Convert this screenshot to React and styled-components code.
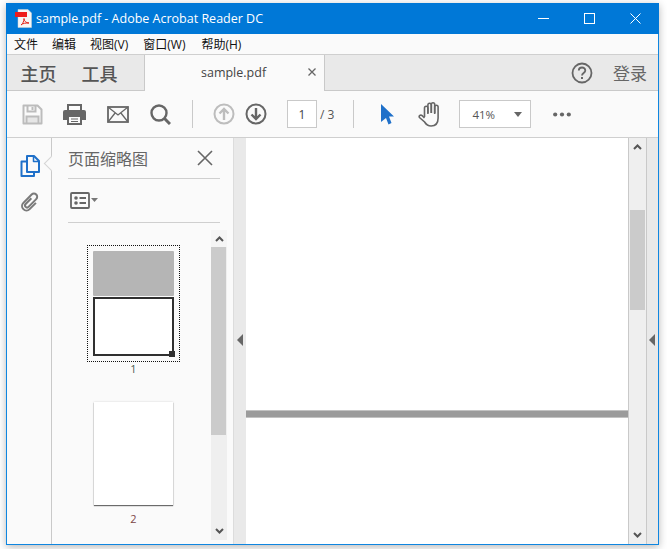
import React from 'react';
import styled, { createGlobalStyle } from 'styled-components';

const cjk = '"Open Sans", "Noto Sans CJK SC", sans-serif';

const GlobalStyle = createGlobalStyle`
  html, body {
    margin: 0;
    padding: 0;
    background: #fff;
  }
  body {
    width: 667px;
    height: 549px;
    overflow: hidden;
    font-family: ${cjk};
  }
`;

const Desktop = styled.div`
  width: 667px;
  height: 549px;
  padding: 3px 8px 4px 6px;
  box-sizing: border-box;
`;

const Window = styled.div`
  height: 100%;
  display: flex;
  flex-direction: column;
  box-sizing: border-box;
  border: 1px solid #0f86e0;
  border-top: 0;
  background: #fafafa;
  box-shadow: 0 2px 8px rgba(0, 0, 0, 0.28);
`;

const TitleBar = styled.div`
  height: 31px;
  flex: none;
  margin: 0 -1px;
  background: #0078d7;
  color: #fff;
  display: flex;
  align-items: center;
  padding-left: 9px;
  padding-right: 1px;
  font-size: 12.5px;
`;

const TitleText = styled.span`
  margin-left: 4px;
  flex: 1;
`;

const WinButton = styled.div`
  width: 46px;
  height: 31px;
  display: flex;
  align-items: center;
  justify-content: center;
`;

const MenuBar = styled.div`
  height: 20px;
  flex: none;
  display: flex;
  align-items: center;
  padding-left: 7px;
  font-size: 12px;
  color: #111;
  background: #fafafa;
  border-bottom: 1px solid #cfcfcf;
`;

const MenuItem = styled.span`
  margin-left: ${p => p.$gap}px;
`;

const TabBar = styled.div`
  height: 35px;
  flex: none;
  display: flex;
  background: #e9e9e9;
  border-bottom: 1px solid #c9c9c9;
`;

const HomeTabs = styled.div`
  width: 137px;
  display: flex;
  align-items: center;
  gap: 25px;
  padding-left: 13.5px;
  box-sizing: border-box;
  font-size: 18px;
  color: #555;
  font-weight: 500;
`;

const FileTab = styled.div`
  width: 181px;
  height: 36px;
  box-sizing: border-box;
  background: #fafafa;
  border-left: 1px solid #c9c9c9;
  border-right: 1px solid #c9c9c9;
  display: flex;
  align-items: center;
  padding-left: 56px;
  padding-bottom: 2px;
  font-size: 12.5px;
  color: #444;
`;

const TabClose = styled.span`
  margin-left: auto;
  margin-right: 8px;
  display: flex;
`;

const TabRight = styled.div`
  flex: 1;
  display: flex;
  justify-content: flex-end;
  align-items: center;
  gap: 20px;
  padding-right: 11px;
  font-size: 17px;
  color: #666;
`;

const Toolbar = styled.div`
  height: 46px;
  flex: none;
  display: flex;
  align-items: center;
  padding-left: 15px;
  background: #fafafa;
  border-bottom: 1px solid #cfcfcf;
  box-sizing: content-box;
`;

const ToolIcon = styled.div`
  display: flex;
  margin-left: ${p => p.$gap || 0}px;
`;

const ToolDivider = styled.div`
  width: 1px;
  height: 28px;
  background: #c9c9c9;
  margin-left: ${p => p.$gap}px;
`;

const PageInput = styled.div`
  width: 30px;
  height: 28px;
  margin-left: 20px;
  box-sizing: border-box;
  border: 1px solid #c9c9c9;
  background: #fff;
  display: flex;
  align-items: center;
  justify-content: center;
  font-size: 12px;
  color: #444;
`;

const PageCount = styled.span`
  margin-left: 3px;
  font-size: 12px;
  color: #555;
`;

const ZoomSelect = styled.div`
  width: 72px;
  height: 28px;
  margin-left: 18px;
  box-sizing: border-box;
  border: 1px solid #c9c9c9;
  background: #fff;
  display: flex;
  align-items: center;
  padding: 0 8px 0 12px;
  justify-content: space-between;
  font-size: 11.5px;
  color: #555;
`;

const Caret = styled.span`
  width: 0;
  height: 0;
  border-left: 4px solid transparent;
  border-right: 4px solid transparent;
  border-top: 5px solid #666;
`;

const Body = styled.div`
  flex: 1;
  min-height: 0;
  display: flex;
`;

const Rail = styled.div`
  width: 45px;
  flex: none;
  box-sizing: border-box;
  border-right: 1px solid #c9c9c9;
  display: flex;
  flex-direction: column;
  align-items: center;
  gap: 14px;
  padding: 17px 0 0 2px;
  position: relative;
`;

const RailNotch = styled.span`
  position: absolute;
  right: -6px;
  top: 20px;
  width: 10px;
  height: 10px;
  background: #fafafa;
  border-left: 1px solid #d4d4d4;
  border-bottom: 1px solid #d4d4d4;
  transform: rotate(45deg);
`;

const Panel = styled.div`
  width: 182px;
  flex: none;
  padding: 0 13px 0 16px;
  box-sizing: border-box;
  display: flex;
  flex-direction: column;
  border-right: 1px solid #dcdcdc;
`;

const PanelHeader = styled.div`
  height: 40px;
  flex: none;
  display: flex;
  align-items: center;
  justify-content: space-between;
  padding-right: 7px;
  border-bottom: 1px solid #cfcfcf;
  font-size: 16px;
  color: #666;
`;

const PanelTools = styled.div`
  height: 43px;
  flex: none;
  display: flex;
  align-items: center;
  gap: 2px;
  padding-left: 2px;
  border-bottom: 1px solid #cfcfcf;
`;

const ThumbArea = styled.div`
  flex: 1;
  min-height: 0;
  display: flex;
  margin: 7px -7px 0 0;
  padding-bottom: 4px;
`;

const ThumbList = styled.div`
  flex: 1;
  display: flex;
  flex-direction: column;
  align-items: center;
  padding: 15px 12px 0 0;
`;

const ThumbFrame = styled.div`
  width: 93px;
  height: 117px;
  box-sizing: border-box;
  border: 1px dotted #111;
  padding: 5px;
  display: flex;
  flex-direction: column;
  position: relative;
`;

const ThumbGrey = styled.div`
  height: 45px;
  background: #b5b5b5;
  border-radius: 1px;
`;

const ThumbView = styled.div`
  flex: 1;
  margin-top: 1px;
  background: #fff;
  border: 2px solid #2f2f2f;
`;

const ThumbHandle = styled.span`
  position: absolute;
  right: 4px;
  bottom: 4px;
  width: 6px;
  height: 6px;
  background: #2f2f2f;
`;

const ThumbLabel = styled.div`
  font-size: 11px;
  line-height: 14px;
  margin-top: ${p => p.$gap}px;
  color: ${p => p.$color};
`;

const ThumbPage = styled.div`
  width: 79px;
  height: 103px;
  margin-top: 26px;
  background: #fff;
  box-shadow: 0 0 2px rgba(0, 0, 0, 0.15), 0 1px 1px rgba(0, 0, 0, 0.55);
`;

const Scrollbar = styled.div`
  width: ${p => p.$width}px;
  flex: none;
  background: #efefef;
  display: flex;
  flex-direction: column;
  align-items: ${p => p.$align || 'center'};
  box-sizing: border-box;
`;

const ScrollButton = styled.div`
  height: 17px;
  flex: none;
  display: flex;
  align-items: center;
  justify-content: center;
  background: ${p => p.$bg || 'transparent'};
  align-self: stretch;
`;

const ScrollThumb = styled.div`
  width: 15px;
  height: ${p => p.$height}px;
  margin-top: ${p => p.$top || 0}px;
  flex: none;
  background: #cbcbcb;
`;

const ScrollSpace = styled.div`
  flex: 1;
`;

const Splitter = styled.div`
  width: ${p => p.$width}px;
  flex: none;
  background: #e9e9e9;
  display: flex;
  align-items: center;
  justify-content: center;
  padding: 0 1px 2px 0;
  box-sizing: border-box;
`;

const LeftArrow = styled.span`
  width: 0;
  height: 0;
  border-top: 6px solid transparent;
  border-bottom: 6px solid transparent;
  border-right: 6px solid #666;
`;

const Viewer = styled.div`
  flex: 1;
  min-width: 0;
  background: #fff;
  display: flex;
  flex-direction: column;
  border-right: 1px solid #c9c9c9;
`;

const PageGap = styled.div`
  height: 8px;
  margin-top: 272px;
  flex: none;
  background: #9b9b9b;
  border-top: 1px solid #c2c2c2;
  border-bottom: 1px solid #c2c2c2;
  box-sizing: border-box;
`;

const RightScroll = styled(Scrollbar)`
  border-right: 1px solid #c9c9c9;
`;

const Chevron = ({ down }) => (
  <svg width="9" height="7" viewBox="0 0 9 7">
    <path
      d={down ? 'M1 1l3.500 3.500L8 1' : 'M1 6l3.500-3.500L8 6'}
      fill="none"
      stroke="#555"
      strokeWidth="2"
    />
  </svg>
);

const PdfIcon = () => (
  <svg width="17" height="19" viewBox="0 0 17 19">
    <path d="M3 .5h10l3.500 3.500v14.500H3z" fill="#f6f6f6" stroke="#d0d0d0" strokeWidth="0.5" />
    <rect x="0" y="3" width="12" height="5" fill="#ee1c1c" />
    <path
      d="M6 16c2-1.500 3-4 3-6.500 0 2.500 2 4.500 5 4.500-3 0-6 0-8 2z"
      fill="none"
      stroke="#e2231a"
      strokeWidth="1"
    />
  </svg>
);

const SaveIcon = () => (
  <svg width="21" height="21" viewBox="0 0 21 21" fill="none" stroke="#bcbcbc" strokeWidth="2">
    <path d="M4.500 12.500h12v7h-12z" fill="#e6e6e6" stroke="none" />
    <path d="M1.500 1.500h14l4 4v14h-18z" strokeLinejoin="round" />
    <path d="M5.500 1.500v6h8v-6M4.500 19.500v-7h12v7" />
    <path d="M10.500 3v3" />
  </svg>
);

const PrintIcon = () => (
  <svg width="23" height="21" viewBox="0 0 23 21">
    <path d="M5 1h13v6H5z" fill="none" stroke="#666" strokeWidth="2" />
    <path d="M2 6h19a2 2 0 012 2v8h-5v-4H5v4H0V8a2 2 0 012-2z" fill="#666" />
    <path d="M5 12h13v8H5z" fill="#fafafa" stroke="#666" strokeWidth="2" />
    <path d="M8 15h7M8 17.500h7" stroke="#666" />
  </svg>
);

const MailIcon = () => (
  <svg width="22" height="17" viewBox="0 0 22 17" fill="none" stroke="#666" strokeWidth="1.800">
    <rect x="1" y="1" width="20" height="15" />
    <path d="M1 1l10 8 10-8M1 16l7.500-9.500M21 16l-7.500-9.500" strokeWidth="1.300" />
  </svg>
);

const SearchIcon = () => (
  <svg width="21" height="21" viewBox="0 0 21 21" fill="none" stroke="#666">
    <circle cx="9" cy="9" r="7.500" strokeWidth="2.400" />
    <path d="M14 14l6 6" strokeWidth="3" />
  </svg>
);

const ArrowCircle = ({ up, color }) => (
  <svg width="22" height="22" viewBox="0 0 22 22" fill="none" stroke={color}>
    <circle cx="11" cy="11" r="9.500" strokeWidth="2" />
    <path
      d={up ? 'M11 17V6M6.500 10.500L11 6l4.500 4.500' : 'M11 5v11M6.500 11.500L11 16l4.500-4.500'}
      strokeWidth="2.400"
    />
  </svg>
);

const CursorIcon = () => (
  <svg width="13" height="21" viewBox="0 0 13 21">
    <path d="M0 0l13 12.500H8l2.500 6.500-3 1.500L5 14l-5 4z" fill="#1f70c9" />
  </svg>
);

const HandIcon = () => (
  <svg width="23" height="25" viewBox="0 0 23 25" fill="none" stroke="#666" strokeWidth="1.600">
    <path d="M6.500 15V6a1.700 1.700 0 013.400 0v6" />
    <path d="M9.900 11V3a1.700 1.700 0 013.400 0v8" />
    <path d="M13.300 11V2.500a1.700 1.700 0 013.400 0V11" />
    <path d="M16.700 12V5a1.700 1.700 0 013.400 0v11c0 5-2.500 8-7 8-3.500 0-5-1.500-6.500-4L1.500 15.500c-1-1.600 1-3.200 2.700-1.800L6.500 16" />
  </svg>
);

const HelpIcon = () => (
  <svg width="22" height="22" viewBox="0 0 22 22">
    <circle cx="11" cy="11" r="9.500" fill="none" stroke="#666" strokeWidth="1.800" />
    <path
      d="M7.800 8.500c0-4 6.500-4 6.500 0 0 2.500-3.300 2.500-3.300 5"
      fill="none"
      stroke="#666"
      strokeWidth="1.800"
    />
    <rect x="10" y="15" width="2" height="2" fill="#666" />
  </svg>
);

const PagesIcon = () => (
  <svg width="20" height="22" viewBox="0 0 20 22" fill="none" stroke="#1f70c9" strokeWidth="2" strokeLinejoin="round">
    <path d="M6.500 6.500H1.500v14.500h12.500v-4" />
    <path d="M7 1h7l5 5v11H7z" />
    <path d="M13.500 1v5.500H19" strokeWidth="1.500" />
  </svg>
);

const ClipIcon = () => (
  <svg width="21" height="22" viewBox="-1 -1 26 26" fill="none" stroke="#7a7a7a" strokeWidth="2.500">
    <g transform="rotate(45 12 12)">
      <path d="M9.500 8v10a2.500 2.500 0 005 0V4.500a4 4 0 00-8 0V19a5.500 5.500 0 0011 0V8" />
    </g>
  </svg>
);

const CloseLines = ({ size, color, width }) => (
  <svg width={size} height={size} viewBox="0 0 16 16">
    <path d="M1 1l14 14M15 1L1 15" stroke={color} strokeWidth={width} fill="none" />
  </svg>
);

const ListViewIcon = () => (
  <svg width="28" height="17" viewBox="0 0 28 17">
    <rect x="1" y="1" width="18" height="15" rx="1" fill="none" stroke="#666" strokeWidth="1.800" />
    <circle cx="6" cy="6" r="1.800" fill="#666" />
    <circle cx="6" cy="11" r="1.800" fill="#666" />
    <path d="M9.500 6H16M9.500 11H16" stroke="#666" strokeWidth="1.800" />
    <path d="M21 6h7l-3.500 4z" fill="#777" />
  </svg>
);

const DotsIcon = () => (
  <svg width="18" height="5" viewBox="0 0 18 5" fill="#666">
    <circle cx="2.200" cy="2.500" r="2.100" />
    <circle cx="9" cy="2.500" r="2.100" />
    <circle cx="15.800" cy="2.500" r="2.100" />
  </svg>
);

const menus = [
  { label: '文件', gap: 0 },
  { label: '编辑', gap: 14 },
  { label: '视图(V)', gap: 14 },
  { label: '窗口(W)', gap: 15 },
  { label: '帮助(H)', gap: 16 }
];

export default function App() {
  return (
    <>
      <GlobalStyle />
      <Desktop>
        <Window>
          <TitleBar>
            <PdfIcon />
            <TitleText>sample.pdf - Adobe Acrobat Reader DC</TitleText>
            <WinButton>
              <svg width="11" height="11" viewBox="0 0 11 11">
                <path d="M0 5.500h11" stroke="#fff" />
              </svg>
            </WinButton>
            <WinButton>
              <svg width="11" height="11" viewBox="0 0 11 11">
                <rect x=".5" y=".5" width="10" height="10" fill="none" stroke="#fff" />
              </svg>
            </WinButton>
            <WinButton>
              <svg width="11" height="11" viewBox="0 0 11 11">
                <path d="M.5.500l10 10M10.500.500l-10 10" stroke="#fff" />
              </svg>
            </WinButton>
          </TitleBar>
          <MenuBar>
            {menus.map(m => (
              <MenuItem key={m.label} $gap={m.gap}>{m.label}</MenuItem>
            ))}
          </MenuBar>
          <TabBar>
            <HomeTabs>
              <span>主页</span>
              <span>工具</span>
            </HomeTabs>
            <FileTab>
              sample.pdf
              <TabClose>
                <CloseLines size={8} color="#666" width={2.6} />
              </TabClose>
            </FileTab>
            <TabRight>
              <HelpIcon />
              <span>登录</span>
            </TabRight>
          </TabBar>
          <Toolbar>
            <ToolIcon><SaveIcon /></ToolIcon>
            <ToolIcon $gap={20}><PrintIcon /></ToolIcon>
            <ToolIcon $gap={21}><MailIcon /></ToolIcon>
            <ToolIcon $gap={21}><SearchIcon /></ToolIcon>
            <ToolDivider $gap={21} />
            <ToolIcon $gap={20}><ArrowCircle up color="#bdbdbd" /></ToolIcon>
            <ToolIcon $gap={10}><ArrowCircle color="#666" /></ToolIcon>
            <PageInput>1</PageInput>
            <PageCount>/ 3</PageCount>
            <ToolDivider $gap={19} />
            <ToolIcon $gap={27}><CursorIcon /></ToolIcon>
            <ToolIcon $gap={24}><HandIcon /></ToolIcon>
            <ZoomSelect>
              41%
              <Caret />
            </ZoomSelect>
            <ToolIcon $gap={22}><DotsIcon /></ToolIcon>
          </Toolbar>
          <Body>
            <Rail>
              <PagesIcon />
              <ClipIcon />
              <RailNotch />
            </Rail>
            <Panel>
              <PanelHeader>
                页面缩略图
                <CloseLines size={16} color="#666" width={1.6} />
              </PanelHeader>
              <PanelTools>
                <ListViewIcon />
              </PanelTools>
              <ThumbArea>
                <ThumbList>
                  <ThumbFrame>
                    <ThumbGrey />
                    <ThumbView />
                    <ThumbHandle />
                  </ThumbFrame>
                  <ThumbLabel $gap={0} $color="#4a5a50">1</ThumbLabel>
                  <ThumbPage />
                  <ThumbLabel $gap={7} $color="#7a4545">2</ThumbLabel>
                </ThumbList>
                <Scrollbar $width={16} $align="flex-start">
                  <ScrollButton $bg="#f5f5f5"><Chevron /></ScrollButton>
                  <ScrollThumb $height={188} />
                  <ScrollSpace />
                  <ScrollButton><Chevron down /></ScrollButton>
                </Scrollbar>
              </ThumbArea>
            </Panel>
            <Splitter $width={12}><LeftArrow /></Splitter>
            <Viewer>
              <PageGap />
            </Viewer>
            <RightScroll $width={18}>
              <ScrollButton><Chevron /></ScrollButton>
              <ScrollThumb $height={100} $top={55} />
              <ScrollSpace />
              <ScrollButton><Chevron down /></ScrollButton>
            </RightScroll>
            <Splitter $width={11}><LeftArrow /></Splitter>
          </Body>
        </Window>
      </Desktop>
    </>
  );
}
